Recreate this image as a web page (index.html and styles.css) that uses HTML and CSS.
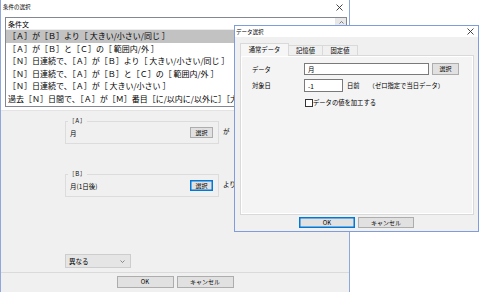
FILE: index.html
```html
<!DOCTYPE html>
<html lang="ja">
<head>
<meta charset="utf-8">
<title>条件の選択</title>
<link rel="stylesheet" href="styles.css">
</head>
<body>
<div class="desktop">
  <div class="win main">
    <div class="titlebar">
      <span class="title">条件の選択</span>
      <svg class="close" width="7" height="7" viewBox="0 0 7 7"><path d="M0.5 0.5L6.5 6.5M6.5 0.5L0.5 6.5" stroke="#333" stroke-width="0.9"/></svg>
    </div>
    <div class="listwrap">
      <div class="listbox">
        <div class="listcol">
          <div class="lhead">条件文</div>
          <div class="lrow sel">［Ａ］が［Ｂ］より［ 大きい/小さい/同じ ］</div>
          <div class="lrow">［Ａ］が［Ｂ］と［Ｃ］の［ 範囲内/外 ］</div>
          <div class="lrow">［Ｎ］日連続で、［Ａ］が［Ｂ］より［ 大きい/小さい/同じ ］</div>
          <div class="lrow">［Ｎ］日連続で、［Ａ］が［Ｂ］と［Ｃ］の［ 範囲内/外 ］</div>
          <div class="lrow">［Ｎ］日連続で、［Ａ］が［ 大きい/小さい ］</div>
          <div class="lrow">過去［Ｎ］日間で、［Ａ］が［Ｍ］番目［に/以内に/以外に］［大きい/小さい］</div>
        </div>
        <div class="vscroll">
          <div class="sbtn"><svg width="5" height="3" viewBox="0 0 5 3"><path d="M0.5 2.5L2.5 0.5L4.5 2.5" fill="none" stroke="#606060" stroke-width="0.8"/></svg></div>
        </div>
      </div>
    </div>
    <div class="mainbody">
      <div class="grouprow">
        <fieldset class="group">
          <legend>［Ａ］</legend>
          <div class="gcontent"><span>月</span><button class="btn sm">選択</button></div>
        </fieldset>
        <span class="conj">が</span>
      </div>
      <div class="grouprow second">
        <fieldset class="group">
          <legend>［Ｂ］</legend>
          <div class="gcontent"><span>月(1日後)</span><button class="btn sm focus">選択</button></div>
        </fieldset>
        <span class="conj">より</span>
      </div>
      <div class="combo"><span>異なる</span><svg width="5" height="3" viewBox="0 0 5 3"><path d="M0.5 0.5L2.5 2.5L4.5 0.5" fill="none" stroke="#606060" stroke-width="0.7"/></svg></div>
    </div>
    <div class="footer">
      <button class="btn big">OK</button>
      <button class="btn big">キャンセル</button>
    </div>
  </div>

  <div class="win dialog">
    <div class="titlebar dtitle">
      <span class="title">データ選択</span>
      <svg class="close" width="7" height="7" viewBox="0 0 7 7"><path d="M0.5 0.5L6.5 6.5M6.5 0.5L0.5 6.5" stroke="#333" stroke-width="0.9"/></svg>
    </div>
    <div class="tabs">
      <div class="tab active">通常データ</div>
      <div class="tab">記憶値</div>
      <div class="tab">固定値</div>
    </div>
    <div class="panel">
      <div class="frow">
        <span class="flabel">データ</span>
        <span class="input wide">月</span>
        <button class="btn sel">選択</button>
      </div>
      <div class="frow r2">
        <span class="flabel">対象日</span>
        <span class="input short">-1</span>
        <span class="unit">日前</span>
        <span class="note">（ゼロ指定で当日データ）</span>
      </div>
      <div class="frow r3">
        <span class="flabel"></span>
        <span class="check"></span>
        <span>データの値を加工する</span>
      </div>
    </div>
    <div class="dfooter">
      <button class="btn dbtn focus">OK</button>
      <button class="btn dbtn">キャンセル</button>
    </div>
  </div>
</div>
</body>
</html>
```

FILE: styles.css
```css
* { box-sizing: border-box; }
html, body { margin: 0; padding: 0; background: #ffffff; }
body {
  width: 480px; height: 292px; overflow: hidden;
  font-family: "Noto Sans CJK JP", "Noto Sans", sans-serif;
  font-size: 6.5px; color: #000;
}
.desktop { position: relative; width: 480px; height: 292px; }
.win { position: absolute; background: #f0f0f0; display: flex; flex-direction: column; }
.main { left: 0; top: 0; width: 350px; height: 300px; border-left: 1px solid #8fa7db; border-right: 1px solid #8fa7db; }
.dialog { left: 234px; top: 25px; width: 245px; height: 207px; border: 1px solid #7f9cdb; }

.titlebar { height: 14px; background: #fff; display: flex; align-items: center; justify-content: space-between; padding: 0 6px 0 2px; flex: none; }
.titlebar .title { font-size: 5.5px; line-height: 8px; }
.dtitle { height: 11px; padding: 0 4px 0 1px; }

.listwrap { background: #fff; padding: 3px 2px 3px 4px; flex: none; border-bottom: 1px solid #e3e3e3; }
.listbox { height: 90px; border: 1px solid #828790; background: #fff; display: flex; overflow: hidden; }
.listcol { flex: 1; overflow: hidden; min-width: 0; }
.lhead { height: 12px; line-height: 12px; padding-left: 2px; font-size: 7px; border-bottom: 1px solid #ececec; }
.lrow { height: 12.6px; line-height: 12.6px; padding-left: 2px; font-size: 8px; white-space: nowrap; }
.lrow.sel { background: #c2c2c2; }
.vscroll { width: 11px; flex: none; background: #f0f0f0; border-left: 1px solid #e6e6e6; }
.sbtn { height: 9px; display: flex; align-items: center; justify-content: center; background: #e8e8e8; }

.mainbody { flex: 1; padding-left: 64px; display: flex; flex-direction: column; }
.grouprow { display: flex; align-items: center; margin-top: 6px; }
.grouprow.second { margin-top: 26px; }
.group { margin: 0; width: 154px; border: 1px solid #dcdcdc; padding: 0 5px 5px 4px; min-inline-size: 0; }
.group legend { font-size: 5.5px; line-height: 8px; padding: 0 1px; margin-left: -2px; }
.gcontent { display: flex; align-items: center; justify-content: space-between; margin-top: 2px; font-size: 6.5px; }
.conj { margin-left: 4px; font-size: 6.5px; }

.btn { font-family: inherit; font-size: 6px; color: #000; background: #e1e1e1; border: 1px solid #adadad; padding: 0; margin: 0; display: flex; align-items: center; justify-content: center; line-height: 1; }
.btn.focus { border-color: #0078d7; box-shadow: inset 0 0 0 0.5px #0078d7; }
.btn.sm { width: 23px; height: 11px; }

.combo { margin-top: 57px; width: 66px; height: 14px; background: #e5e5e5; border: 1px solid #cdcdcd; display: flex; align-items: center; justify-content: space-between; padding: 0 5px 0 3px; font-size: 6.5px; }

.footer { height: 20px; flex: none; margin-bottom: 8px; border-top: 1px solid #dadada; display: flex; justify-content: center; align-items: flex-start; gap: 3px; padding-top: 3px; }
.btn.big { width: 57px; height: 12px; }

.tabs { display: flex; align-items: flex-end; margin: 6px 0 0 5px; height: 12px; position: relative; z-index: 1; }
.tab { height: 10px; line-height: 9px; padding: 0 7px; border: 1px solid #d9d9d9; border-bottom: none; background: #f0f0f0; font-size: 6.3px; margin-left: -1px; }
.tab:nth-child(2) { width: 35px; text-align: center; padding: 0; }
.tab:nth-child(3) { width: 36px; text-align: center; padding: 0; }
.tab.active { height: 13px; line-height: 11px; width: 49px; margin-left: 0; background: #f6f6f6; margin-bottom: -1px; padding: 0; text-align: center; }
.panel { margin: 0 4px 0 5px; height: 160px; border: 1px solid #d9d9d9; background: #f4f4f4; box-shadow: inset 0 0 0 1px #fff; padding: 7px 0 0 11px; flex: none; }
.frow { display: flex; align-items: center; height: 12px; }
.frow.r2 { margin-top: 4px; height: 13px; }
.frow.r3 { margin-top: 6px; height: 9px; }
.flabel { width: 52px; flex: none; font-size: 6.3px; }
.input { background: #fff; border: 1px solid #7a7a7a; height: 12px; display: flex; align-items: center; padding-left: 3px; font-size: 6.5px; }
.input.wide { width: 125px; }
.input.short { width: 39px; height: 13px; }
.btn.sel { width: 27px; height: 12px; margin-left: 3px; }
.unit { margin-left: 4px; font-size: 6.3px; }
.note { margin-left: 9px; font-size: 6.3px; }
.check { width: 8px; height: 8px; border: 1px solid #333; background: #fff; margin-left: 1px; flex: none; }
.r3 span:last-child { font-size: 6.3px; }
.dfooter { display: flex; justify-content: center; gap: 3px; margin-top: 2px; }
.btn.dbtn { width: 56px; height: 11px; }
```
